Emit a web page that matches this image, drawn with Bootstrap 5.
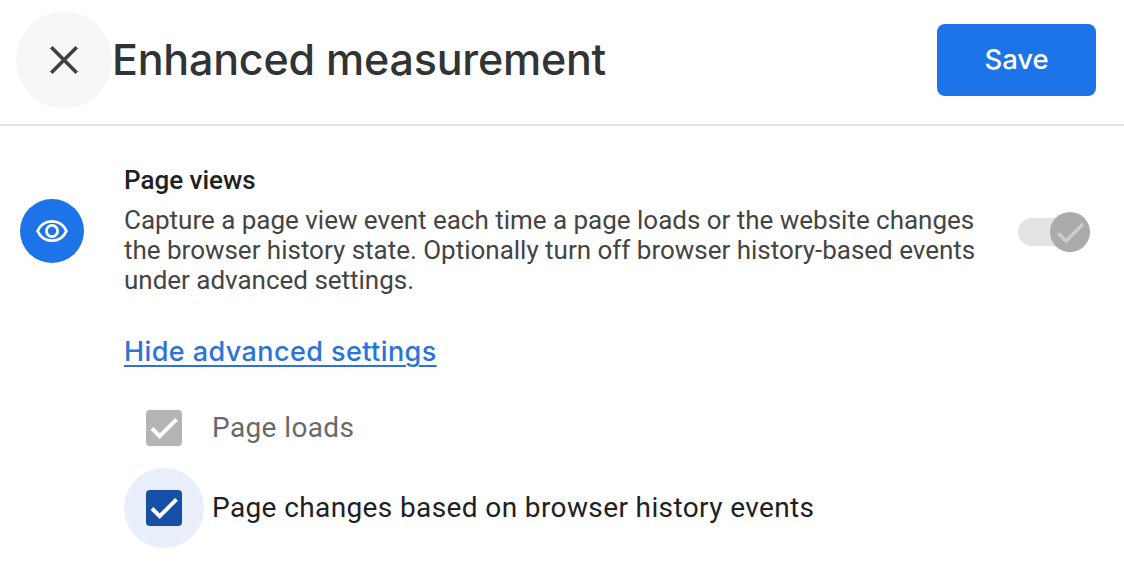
<!DOCTYPE html>
<html lang="en">
<head>
<meta charset="utf-8">
<meta name="viewport" content="width=device-width, initial-scale=1">
<title>Enhanced measurement</title>
<link href="https://cdn.jsdelivr.net/npm/bootstrap@5.3.0/dist/css/bootstrap.min.css" rel="stylesheet">
<style>
body{font-family:Roboto,"Liberation Sans",sans-serif;color:#202124;background:#fff;overflow:hidden}
.topbar{height:126px;border-bottom:2px solid #e0e0e0;padding:0 28px 4px 16px}
.close-btn{width:96px;height:96px;background:#f6f6f6;border:0}
.title{font-family:Inter,sans-serif;font-weight:500;font-size:43px;line-height:56px;letter-spacing:-.22px;color:#323335;padding:0 0 2px}
.save-btn{width:159px;height:72px;border:0;border-radius:8px;background:#1d73e8;font-family:Inter,sans-serif;font-weight:500;font-size:27.5px;letter-spacing:-.1px}
.section-row{padding:0 34px 0 20px;margin-top:39px}
.eye-badge{width:64px;height:64px;background:#1d73e8;margin-top:34px}
.copy{margin-left:40px;width:870px}
.copy h2{font-size:26px;font-weight:500;line-height:30px;margin:0 0 10px}
.copy p{font-size:26px;line-height:30px;letter-spacing:-.015px;color:#444444;margin:0}
.switch{width:72px;height:40px;margin-top:47px}
.settings{margin-left:124px;padding-top:39px}
.advanced{font-family:Inter,sans-serif;font-weight:500;font-size:27px;line-height:36px;letter-spacing:.42px;color:#2b72d9;text-decoration-thickness:2px;text-underline-offset:4px}
.options{margin-top:18px}
.option{height:80px;font-size:28px;letter-spacing:.385px}
.option.locked{color:#67696b}
.halo{width:80px;height:80px;margin-right:8px}
.halo.focused{background:#e8effb}
</style>
</head>
<body>
<header class="topbar d-flex align-items-center">
  <button class="close-btn rounded-circle p-0 d-flex align-items-center justify-content-center flex-shrink-0" aria-label="Close">
    <svg width="28" height="28" viewBox="0 0 28 28" fill="none" stroke="#3c4043" stroke-width="3.6"><path d="M1.3 1.3 26.7 26.7M26.7 1.3 1.3 26.7"/></svg>
  </button>
  <h1 class="title mb-0 text-nowrap">Enhanced measurement</h1>
  <button class="save-btn btn btn-primary ms-auto p-0">Save</button>
</header>
<main>
  <section class="section-row d-flex align-items-start">
    <div class="eye-badge rounded-circle d-flex align-items-center justify-content-center flex-shrink-0">
      <svg width="32" height="24" viewBox="0 0 32 24" fill="none" stroke="#fff" stroke-width="2.8"><path d="M1.6 12C4.3 5.8 9.5 2.3 16 2.3S27.7 5.8 30.4 12C27.7 18.2 22.5 21.7 16 21.7S4.3 18.2 1.6 12Z"/><circle cx="16" cy="12" r="5.6"/></svg>
    </div>
    <div class="copy flex-shrink-0">
      <h2>Page views</h2>
      <p class="text-nowrap">Capture a page view event each time a page loads or the website changes<br>the browser history state. Optionally turn off browser history-based events<br>under advanced settings.</p>
    </div>
    <svg class="switch ms-auto flex-shrink-0" viewBox="0 0 72 40"><rect y="6" width="60" height="28" rx="14" fill="#e3e3e3"/><circle cx="52" cy="20" r="20" fill="#ababab"/><path d="m40.500 21.500 7.500 7.500L65 12" fill="none" stroke="#cdcdcd" stroke-width="3.500"/></svg>
  </section>
  <div class="settings">
    <div class="d-flex"><a href="#" class="advanced">Hide advanced settings</a></div>
    <div class="options">
    <label class="option locked d-flex align-items-center">
      <span class="halo rounded-circle d-flex align-items-center justify-content-center"><svg width="36" height="36" viewBox="0 0 36 36"><rect width="36" height="36" rx="4" fill="#b5b5b5"/><path d="m6 18.500 7.700 7.700L30.500 9.400" fill="none" stroke="#fff" stroke-width="4"/></svg></span>Page loads
    </label>
    <label class="option d-flex align-items-center">
      <span class="halo focused rounded-circle d-flex align-items-center justify-content-center"><svg width="36" height="36" viewBox="0 0 36 36"><rect width="36" height="36" rx="4" fill="#174ea6"/><path d="m6 18.500 7.700 7.700L30.500 9.400" fill="none" stroke="#fff" stroke-width="4"/></svg></span>Page changes based on browser history events
    </label>
    </div>
  </div>
</main>
<script src="https://cdn.jsdelivr.net/npm/bootstrap@5.3.0/dist/js/bootstrap.bundle.min.js"></script>
</body>
</html>
